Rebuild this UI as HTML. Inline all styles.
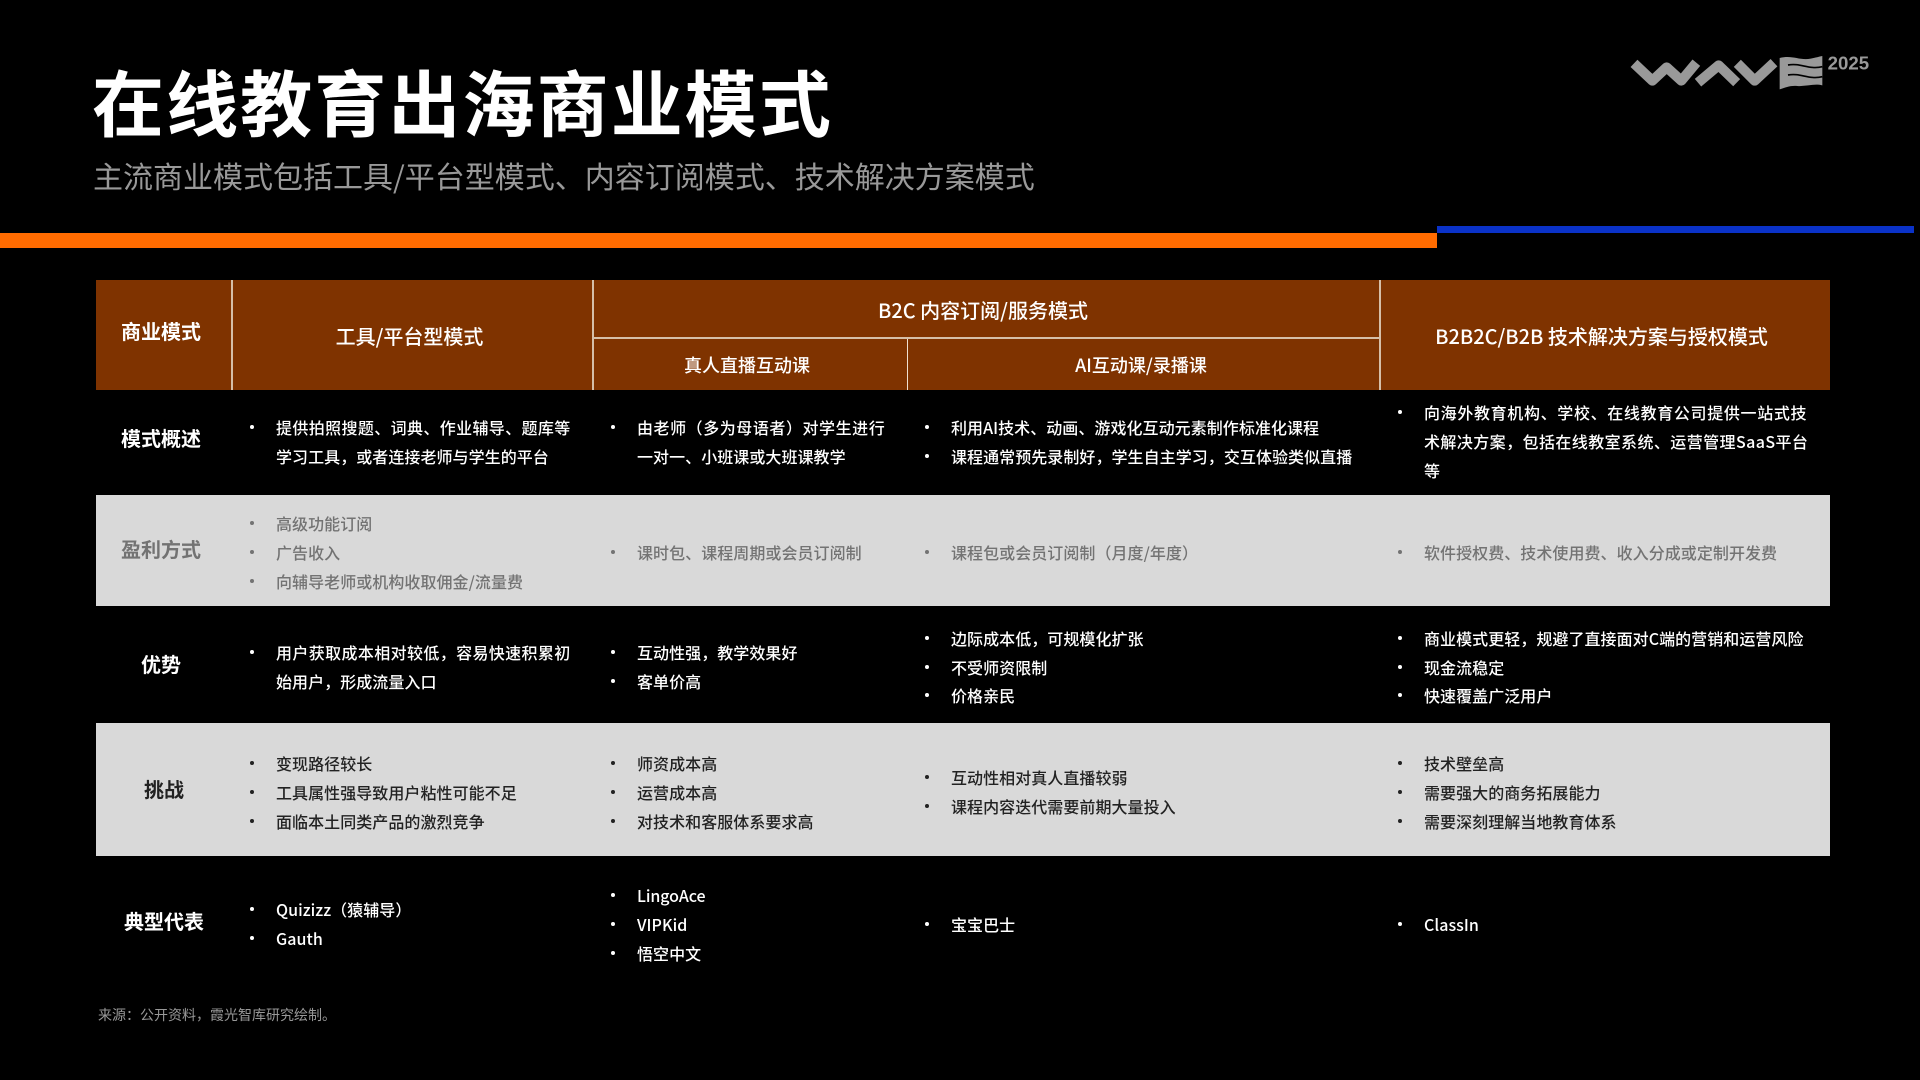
<!DOCTYPE html>
<html lang="zh-CN"><head><meta charset="utf-8"><title>在线教育出海商业模式</title>
<style>
html,body{margin:0;padding:0;background:#000}
#p{position:relative;width:1920px;height:1080px;overflow:hidden;background:#000;font-family:"Noto Sans CJK SC","Liberation Sans",sans-serif;color:#fff}
#p div{position:absolute}
.r{left:96px;width:1734px}
.t{white-space:nowrap;font-size:16px;line-height:30px;height:30px;letter-spacing:.05px;font-weight:500}
.b::before{content:"";position:absolute;left:-26px;top:13px;width:4px;height:4px;border-radius:50%;background:currentColor}
.h{white-space:nowrap;transform:translate(-50%,-50%);font-weight:700;font-size:20px;line-height:30px}
.m{font-weight:500}
.g{color:#737373}.k{color:#222}
.v{background:#d6bfa8}
</style></head><body><div id="p">
<div style="left:92px;top:47px;font-size:72px;line-height:106px;font-weight:700;letter-spacing:2.1px;white-space:nowrap">在线教育出海商业模式</div>
<div style="left:93px;top:153px;font-size:30px;line-height:44px;color:#999;white-space:nowrap">主流商业模式包括工具/平台型模式、内容订阅模式、技术解决方案模式</div>
<svg style="position:absolute;left:1624px;top:50px" width="250" height="45" viewBox="0 0 750 135">
<g fill="none" stroke="#999" stroke-width="30" stroke-linejoin="round"><path d="M30 40L85 92L128 52L172 92L217 38"/><path d="M222 98L284 46L338 98"/><path d="M340 40L392 92L450 38"/></g>
<path fill="#999" d="M467 24C505 14 525 32 560 26C575 23 585 20 595 18V106C570 100 545 110 520 108C500 106 485 112 467 118Z"/>
<path fill="none" stroke="#000" stroke-width="5" d="M492 45C530 38 555 60 595 50M492 75C530 68 555 90 595 80"/>
<text x="611" y="58" font-size="56" font-weight="700" fill="#999" font-family="Liberation Sans,sans-serif">2025</text></svg>
<div style="left:0;top:233px;width:1437px;height:15px;background:#ff6b00"></div>
<div style="left:1437px;top:226px;width:477px;height:7px;background:#0a32c8"></div>

<div class="r" style="top:280px;height:110px;background:#7f3300"></div>
<div class="r" style="top:495px;height:111px;background:#d9d9d9"></div>
<div class="r" style="top:723px;height:133px;background:#d9d9d9"></div>
<div class="v" style="left:231px;top:280px;width:2px;height:110px"></div>
<div class="v" style="left:592px;top:280px;width:2px;height:110px"></div>
<div class="v" style="left:907px;top:338px;width:1px;height:52px;background:#f0e0d0"></div>
<div class="v" style="left:1379px;top:280px;width:2px;height:110px"></div>
<div class="v" style="left:593px;top:337px;width:787px;height:2px"></div>

<div class="h" style="left:161px;top:331px">商业模式</div>
<div class="h m" style="left:409.5px;top:336px">工具/平台型模式</div>
<div class="h m" style="left:983px;top:310px">B2C 内容订阅/服务模式</div>
<div class="h m" style="left:747px;top:365px;font-size:18px">真人直播互动课</div>
<div class="h m" style="left:1141px;top:365px;font-size:18px">AI互动课/录播课</div>
<div class="h m" style="left:1601.5px;top:336px">B2B2C/B2B 技术解决方案与授权模式</div>

<div class="h" style="left:161px;top:438px">模式概述</div>
<div class="h g" style="left:161px;top:549px">盈利方式</div>
<div class="h" style="left:161px;top:664px">优势</div>
<div class="h k" style="left:164px;top:789px">挑战</div>
<div class="h" style="left:164px;top:921px">典型代表</div>

<div class="t b" style="left:276px;top:412px;letter-spacing:.37px">提供拍照搜题、词典、作业辅导、题库等</div>
<div class="t" style="left:276px;top:441px">学习工具，或者连接老师与学生的平台</div>
<div class="t b" style="left:637px;top:412px;letter-spacing:.55px">由老师（多为母语者）对学生进行</div>
<div class="t" style="left:637px;top:441px">一对一、小班课或大班课教学</div>
<div class="t b" style="left:951px;top:412px">利用AI技术、动画、游戏化互动元素制作标准化课程</div>
<div class="t b" style="left:951px;top:441px">课程通常预先录制好，学生自主学习，交互体验类似直播</div>
<div class="t b" style="left:1424px;top:397px;letter-spacing:.66px">向海外教育机构、学校、在线教育公司提供一站式技</div>
<div class="t" style="left:1424px;top:426px;letter-spacing:.42px">术解决方案，包括在线教室系统、运营管理SaaS平台</div>
<div class="t" style="left:1424px;top:455px">等</div>

<div class="t b g" style="left:276px;top:508px">高级功能订阅</div>
<div class="t b g" style="left:276px;top:537px">广告收入</div>
<div class="t b g" style="left:276px;top:566px">向辅导老师或机构收取佣金/流量费</div>
<div class="t b g" style="left:637px;top:537px">课时包、课程周期或会员订阅制</div>
<div class="t b g" style="left:951px;top:537px">课程包或会员订阅制（月度/年度）</div>
<div class="t b g" style="left:1424px;top:537px">软件授权费、技术使用费、收入分成或定制开发费</div>

<div class="t b" style="left:276px;top:637px;letter-spacing:.37px">用户获取成本相对较低，容易快速积累初</div>
<div class="t" style="left:276px;top:666px">始用户，形成流量入口</div>
<div class="t b" style="left:637px;top:637px">互动性强，教学效果好</div>
<div class="t b" style="left:637px;top:666px">客单价高</div>
<div class="t b" style="left:951px;top:623px">边际成本低，可规模化扩张</div>
<div class="t b" style="left:951px;top:652px">不受师资限制</div>
<div class="t b" style="left:951px;top:680px">价格亲民</div>
<div class="t b" style="left:1424px;top:623px">商业模式更轻，规避了直接面对C端的营销和运营风险</div>
<div class="t b" style="left:1424px;top:652px">现金流稳定</div>
<div class="t b" style="left:1424px;top:680px">快速覆盖广泛用户</div>

<div class="t b k" style="left:276px;top:748px">变现路径较长</div>
<div class="t b k" style="left:276px;top:777px">工具属性强导致用户粘性可能不足</div>
<div class="t b k" style="left:276px;top:806px">面临本土同类产品的激烈竞争</div>
<div class="t b k" style="left:637px;top:748px">师资成本高</div>
<div class="t b k" style="left:637px;top:777px">运营成本高</div>
<div class="t b k" style="left:637px;top:806px">对技术和客服体系要求高</div>
<div class="t b k" style="left:951px;top:762px">互动性相对真人直播较弱</div>
<div class="t b k" style="left:951px;top:791px">课程内容迭代需要前期大量投入</div>
<div class="t b k" style="left:1424px;top:748px">技术壁垒高</div>
<div class="t b k" style="left:1424px;top:777px">需要强大的商务拓展能力</div>
<div class="t b k" style="left:1424px;top:806px">需要深刻理解当地教育体系</div>

<div class="t b" style="left:276px;top:894px">Quizizz（猿辅导）</div>
<div class="t b" style="left:276px;top:923px">Gauth</div>
<div class="t b" style="left:637px;top:880px;letter-spacing:-.1px">LingoAce</div>
<div class="t b" style="left:637px;top:909px">VIPKid</div>
<div class="t b" style="left:637px;top:938px">悟空中文</div>
<div class="t b" style="left:951px;top:909px">宝宝巴士</div>
<div class="t b" style="left:1424px;top:909px">ClassIn</div>

<div style="left:98px;top:1004px;font-size:14px;line-height:22px;color:#999;white-space:nowrap">来源：公开资料，霞光智库研究绘制。</div>
</div></body></html>
